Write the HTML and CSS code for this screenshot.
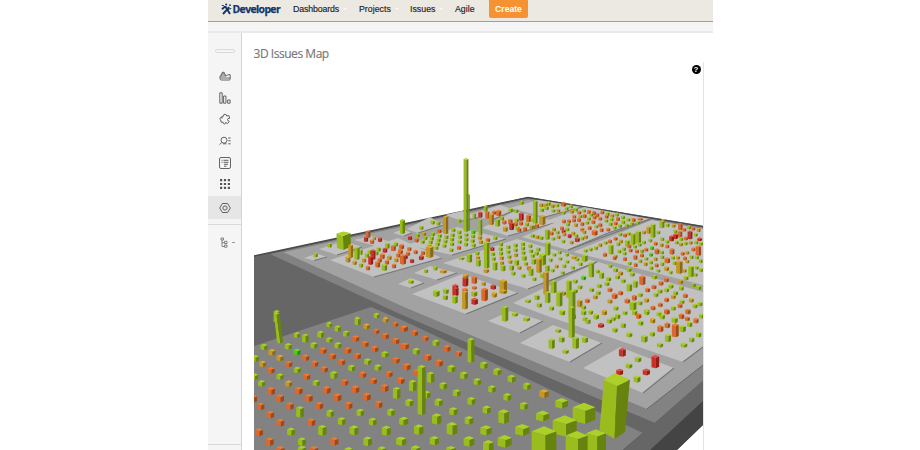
FILE: index.html
```html
<!DOCTYPE html>
<html lang="en">
<head>
<meta charset="utf-8">
<title>3D Issues Map</title>
<link rel="stylesheet" href="styles.css">
</head>
<body>
<div class="app">
  <header class="topbar">
    <div class="logo">
      <svg width="11" height="12" viewBox="0 0 11 12" fill="none" stroke="#12366d"><path stroke-width="1.9" d="M4.2 3.2L9 11M8.2 4.2L2 11M1 6.2L4.2 3.4"/><path stroke-width="1.1" d="M6.2 6.5L10.3 5.5M.8 2.5h2"/><circle cx="5.2" cy="1.6" r="1" fill="#12366d" stroke="none"/><circle cx="9" cy="2.2" r=".9" fill="#12366d" stroke="none"/></svg>
      <span class="brand">Developer</span>
    </div>
    <nav class="nav">
      <a class="item dash">Dashboards<i class="caret"></i></a>
      <a class="item proj">Projects<i class="caret"></i></a>
      <a class="item issues">Issues<i class="caret"></i></a>
      <a class="item agile">Agile</a>
      <a class="create">Create</a>
    </nav>
  </header>
  <div class="strip"></div>
  <div class="body">
    <aside class="sidebar">
      <div class="handle"></div>
      <div class="icons">
        <div class="icon"><svg viewBox="0 0 12 12"><path d="M1 6h6.5l1-1.2H11.2V9q0 1-1 1H2.4Q1 10 1 8.600zM2.200 6V4h4v2M3.200 4V2.300h2V4M1.200 8H11"/></svg></div>
        <div class="icon"><svg viewBox="0 0 12 12"><path d="M.8.8h2.400v10.400H.8zM4.600 4h2.300v7.200H4.600zM8.600 8h2.500v3.200H8.600z"/></svg></div>
        <div class="icon"><svg viewBox="0 0 12 12"><path d="M4.500 3.200Q4.300 1 6 1.200T7.600 3l2.400-.4.6 2.800Q8.500 5.200 8.500 6.600t1.800 1.800L8.500 10.600l-1.900-1.200Q6.500 11.300 5.200 11T4.100 9.200L2 9.100 1.800 7Q.4 6.600 1 5.100t2.200.1L2.900 3.300z"/></svg></div>
        <div class="icon"><svg viewBox="0 0 12 12"><circle cx="5" cy="5.200" r="3"/><path d="M2.800 7.400L.6 9.600M9.200 3h2.500M9.200 5.800h2.500M9.200 8.800h2.500M4 8.800h3.500"/></svg></div>
        <div class="icon"><svg viewBox="0 0 12 12"><rect x=".5" y=".5" width="11" height="11" rx="1.500"/><path d="M2.500 3.300h1M4.500 3.300h5M2.500 5.300h1M4.500 5.300h5M5 7.300h4M5 9.200h2.500"/></svg></div>
        <div class="icon"><svg viewBox="0 0 12 12"><path class="dots" d="M1 2.200h10M1 6h10M1 9.800h10"/></svg></div>
        <div class="icon active"><svg viewBox="0 0 12 12"><path d="M3.400 1.500h5.200L11.300 6 8.600 10.500H3.400L.7 6z"/><circle cx="6" cy="6" r="2.100"/></svg></div>
      </div>
      <div class="tree">
        <svg width="9" height="11" viewBox="0 0 9 11"><path d="M1 1h2.500v2H1zM2 3v6.500h2M2 5.700h2M4.500 4.300H7v2.200H4.500zM4.500 8H7v2.200H4.500z"/></svg><i class="tick"></i>
      </div>
      <div class="foot"></div>
    </aside>
    <main class="main">
      <h1>3D Issues Map</h1>
      <div class="stage">
        <svg id="map" width="449" height="388" viewBox="254 62 449 388"></svg>
        <div class="help">?</div>
      </div>
    </main>
  </div>
</div>
<script src="map.js"></script>
</body>
</html>
```
FILE: styles.css
```css
* { box-sizing: border-box; }
body { margin: 0; background: #fff; font-family: "Liberation Sans", Arial, sans-serif; overflow: hidden; }
.app { width: 505px; height: 450px; margin-left: 207.5px; display: flex; flex-direction: column; overflow: hidden; }
.topbar { height: 22px; flex: none; background: #ece9e2; border-bottom: 1px solid #b99877; display: flex; align-items: flex-start; }
.logo { display: flex; align-items: center; width: 85.5px; padding-left: 13px; height: 18px; }
.brand { font: bold 10.4px "Open Sans", sans-serif; color: #12366d; letter-spacing: -.6px; margin-left: 1px; -webkit-text-stroke: .25px #12366d; }
.nav { display: flex; height: 18px; font-size: 8.8px; color: #222; -webkit-text-stroke: .15px #222; }
.item { display: flex; align-items: center; height: 18px; flex: none; }
.dash { width: 66px; letter-spacing: -.13px; }
.proj { width: 51px; }
.issues { width: 45px; }
.agile { width: 34px; }
.caret { border: 2.5px solid transparent; border-top-color: #fbfaf8; border-bottom: 0; margin-left: 4px; }
.create { width: 39px; height: 18px; line-height: 18px; text-align: center; background: #f79232; color: #fff; font-weight: bold; font-size: 8.6px; border-radius: 0 0 2px 2px; -webkit-text-stroke: 0; }
.strip { height: 11px; flex: none; background: #f5f5f5; border-bottom: 2px solid #e9e9e9; }
.body { flex: 1; display: flex; min-height: 0; }
.sidebar { width: 34.5px; flex: none; background: #f5f5f5; border-right: 1px solid #d4d4d4; display: flex; flex-direction: column; }
.handle { width: 20px; height: 4px; border: 1px solid #d9d9d9; border-radius: 2px; margin: 16px 0 0 7px; flex: none; }
.icons { margin-top: 12px; padding-bottom: 5px; border-bottom: 1px solid #d9d9d9; }
.icon { height: 21.7px; display: flex; align-items: center; justify-content: center; padding-left: 1px; }
.icon svg { width: 12px; height: 12px; }
.icon.active { height: 23px; background: #e6e6e6; margin-top: 1px; }
.sidebar svg { fill: none; stroke: #555; stroke-width: .9; }
.sidebar .dots { stroke-width: 2.2; stroke-dasharray: 2.2 1.7; }
.tree { display: flex; align-items: center; height: 34px; padding-left: 12px; }
.tree svg { stroke: #777; }
.tick { width: 3px; height: 1px; background: #999; margin-left: 3px; }
.foot { margin-top: auto; height: 6px; border-top: 1px solid #d9d9d9; }
.main { flex: 1; padding: 13px 0 0 11.5px; min-width: 0; }
h1 { margin: 0; height: 16px; font: 12px/16px "Open Sans", sans-serif; color: #777; letter-spacing: -.46px; -webkit-text-stroke: .15px #777; }
.stage { width: 450px; height: 388px; border-right: 1px solid #e4e4e4; position: relative; }
#map { display: block; }
.help { position: absolute; right: 2px; top: 3px; width: 9px; height: 9px; border-radius: 50%; background: #000; color: #fff; font: bold 8px/9px "Liberation Sans", sans-serif; text-align: center; }
```
FILE: map.js
```js
const map = document.getElementById('map');
const out = [];
const poly = (points, fill, extra = '') => out.push(`<polygon points="${points}" fill="${fill}" ${extra}/>`);

// Base terraces, from the lowest level up.
poly('254,256 528,197 703,226 703,425 677,450 254,450', '#666');
poly('703,401 650,450 677,450 703,425', '#444');
poly('270,254 528,198 703,227 703,381 655,423 400,314', '#828282');
poly('283,252 528,199 703,228 703,365 647,409 404,307', '#a2a2a2');
out.push('<path d="M655 423L703 381M647 409L703 365" stroke="#666" fill="none"/>');
out.push('<path d="M254 256L528 197.5L703 226.5" stroke="#4b4b4b" stroke-width="1.6" fill="none"/>');
out.push('<path d="M284 251.7L528 199.3L703 228.4" stroke="#858585" fill="none"/>');
poly('254,346 371,307 404,321 643,433 623,450 254,450', '#828282');
out.push('<path d="M643 433L623 450" stroke="#606060" fill="none"/>');

// Project plates: left, bottom, right and top corners.
const plates = [
  [304,258,314,260.5,327,257,317,253.5], [319,249,337,255,362,247,344,241],
  [354,240,379,247,391,242,371,236], [393,233,404,236,412,233,403,229],
  [330,260,374,277,442,258,398,238], [407,229,418,233,444,225,430,217],
  [407,245,452,255,506,239,457,227], [445,215,462,221,481,217,462,211],
  [468,215,492,220,515,210,500,205], [482,228,508,236,558,222,515,211],
  [510,208,545,217,582,207,538,200], [522,237,568,250,608,233,556,222],
  [546,221,608,233,650,219,584,207], [443,263,528,289,597,262,517,239],
  [414,273,437,280,457,273,430,266], [398,284,411,288,424,283,411,278],
  [412,294,466,314,518,293,462,274], [488,321,520,333,543,321,510,311],
  [520,343,570,362,602,343,553,325], [583,368,643,393,674,368,620,347]
];
for (const p of plates) {
  out.push(`<path d="M${p[0]} ${p[1]}L${p[2]} ${p[3]}L${p[4]} ${p[5]}L${p[6]} ${p[7]}Z" fill="#c1c1c1"/>`);
  out.push(`<path d="M${p[2]} ${p[3]}L${p[4]} ${p[5]}" stroke="#777" stroke-width="1.2"/>`);
}
poly('573,252 652,220 703,229 703,285', '#c1c1c1');
poly('513,303 598,262 703,292 703,347 683,362 550,317', '#c1c1c1');
out.push('<path d="M568 250L650 219.5M683 362L703 347M550 281L597 262" stroke="#777" stroke-width="1.3"/>');

const shades = {
  g: ['#abd128', '#9abc1c', '#66840d'], o: ['#ed7b32', '#dc692b', '#9d481b'],
  y: ['#dcab31', '#c39826', '#8e6914'], r: ['#e24b35', '#cb3028', '#911d18'],
  b: ['#65e51b', '#4fcb13', '#32880b']
};
// Each group: origin, default width, default height, then "kind:x,y[,w,h]" at three units per pixel.
const groups = [
[254,190,10,13, `g:68,379,16,36 g:227,166 g:185,195 y:290,183,12,40 g:309,190,13,38 y:282,208,12,18 y:302,218 g:321,226 o:342,234 r:336,148,10,14 o:342,133,12,22 y:361,145,8,10 r:378,149 o:354,155 g:320,186,9,16 g:339,196 g:347,186 y:330,211 r:357,194,12,30 r:350,211,12,26 g:374,178 g:367,189 r:393,181,11,14 g:400,167,11,18 o:418,174,12,18 g:426,163 o:443,170 o:439,183 o:385,199,12,16 o:377,211 o:371,223,12,18 y:406,203,11,14 o:399,217 y:427,210 g:391,232,14,20 o:420,228 o:433,196 g:445,110,12,42 g:368,377,14,12 g:310,387 y:395,387`],
[400,150,10,12, `g:8,229,12,42 g:98,217 g:64,233 g:115,220 g:178,212 y:137,225,13,54 g:205,188,6,110 g:198,135,12,220 o:118,243 g:160,240 g:178,247 r:30,264 g:53,256 o:50,271 y:72,252 g:76,264 g:68,275 g:98,253 g:95,265 g:92,276 g:88,288 g:119,257 g:116,270 g:113,282 g:109,293 g:139,261,10,13 g:136,274 g:133,287 g:158,255 g:156,268 g:156,282 g:154,300 g:180,260 g:179,275 o:177,293 g:199,254 g:199,268 g:198,283 b:220,246 g:219,259 g:218,272 g:221,286 g:241,232,9,50 y:240,263 y:243,276 o:264,270 g:286,264 g:223,198,8,18 r:241,194,10,17 g:257,177,9,19 o:262,195,10,22 y:274,208,13,34 o:282,188 o:296,189,13,18 g:332,180 g:349,183 g:365,158 g:293,218,12,23 o:313,217 y:316,237,12,16 g:306,205 o:331,215,11,16 r:335,229,12,22 g:350,211 r:364,200,12,24 o:347,223 g:353,235 o:358,240 o:363,220 o:386,205,12,22 g:381,223 o:375,237 y:395,231 g:406,186,11,70 y:427,210,16,30 o:411,227 g:398,210 g:426,180 g:440,174 y:424,165 y:437,166 g:446,161 o:5,290,12,14 o:2,306 o:9,328,16,30 o:28,297 o:24,311 r:17,321 r:36,333 o:47,306 r:64,323,12,14 o:69,309 y:89,305,20,36 g:78,363 g:106,355 y:130,364,18,11 g:33,395,14,12 g:260,315,14,80 g:185,325,14,10 g:208,324,14,27 g:232,310 y:234,324 g:235,338,12,22 y:259,362,14,13 r:277,297 g:279,312 g:281,326 g:285,348,12,26 g:303,283 g:302,297 g:303,310 y:305,324 y:306,339 g:309,354,12,19 g:325,291 g:325,305 g:328,320 y:331,335 g:335,353,12,17 g:340,370 g:347,286 g:347,300 y:348,315 g:350,337,12,18 y:358,353 g:370,377 g:369,282 g:369,295 g:370,308 g:373,324,12,16 g:378,341 o:387,355 g:393,366,12,24 g:403,387 g:391,288 g:393,303 g:398,317 g:401,334,12,18 y:417,346,14,44 g:427,376,12,15 g:415,298 g:410,310 g:428,328,18,35 g:443,296,14,40 y:438,399,14,70 g:442,355,11,20 g:398,257 y:412,261 g:424,264 g:400,230 g:442,253,12,32 y:197,389,14,34 r:196,395,14,28 o:223,390,14,22 o:223,413,12,10 y:251,401 r:280,411,14,15 y:310,409,22,44 r:166,420,15,34 g:109,429,16,18 g:137,422,14,13 g:137,442 y:195,438,14,20 o:254,431,16,34 g:222,431,14,16 y:283,436 g:411,440`],
[550,190,9,11, `o:41,43,14,13 g:22,46 y:8,48 g:50,55 g:63,49 g:78,59 y:25,62 g:10,62 g:41,68 y:66,65 o:88,68 g:102,62 o:117,66 o:132,69 g:124,74 o:142,75 o:157,67 g:173,72 y:187,77 o:170,80 g:201,74 o:151,86 g:185,88 o:204,87 g:219,82 g:235,89 o:251,90 g:220,96 o:197,100 g:182,102 g:169,92 o:151,105 o:134,82 g:117,86 o:104,78 g:91,79 o:73,80 o:57,94 o:72,91 o:87,90 o:97,102 g:112,98 o:130,96 g:139,109 o:155,120 o:175,119 g:194,113 g:210,108 g:230,106 g:246,101 o:271,87,13,8 g:264,98 o:42,94 g:54,103 y:78,105 o:119,114 o:97,119 y:70,130 o:134,128,15,17 y:103,126 g:52,118 o:36,115 r:41,124 y:12,118 g:23,127 o:5,130 y:26,141 r:59,138 y:43,133 g:79,137 g:97,145 r:82,149,12,14 y:65,157 g:40,154 g:10,146 y:108,141
g:211,133 o:225,136 g:236,131 o:197,146 o:180,154 g:167,158 y:151,165 g:138,174 g:107,182 g:122,178 g:183,178,12,30 g:205,162 y:213,154 g:232,160,11,20 g:249,147,12,35 g:265,141,14,38 y:282,127 y:296,120,11,22 g:309,122,12,42 g:325,127 g:336,103,12,22 y:340,93 g:353,105 y:371,107 o:391,110,11,20 o:403,119 g:417,112 o:430,116 y:446,120 g:376,124 r:365,145,12,17 o:390,132,11,20 r:377,139,12,16 g:394,147 r:420,135,12,25 o:408,145 g:437,134 r:449,148,12,10 y:393,163 g:407,160 y:422,158 g:439,157 g:453,161 g:380,157 g:352,155 o:352,169 o:366,184,12,18 g:337,147 y:335,165 o:321,184,12,17 b:306,174 b:303,194 o:317,161 g:301,151 g:282,157 g:269,164 g:255,170 o:238,169 g:222,177 g:208,184 g:197,199 o:225,207 o:165,194,10,12 o:194,204 g:224,190 o:242,181 o:261,184 g:276,183 o:256,202,10,14 g:239,220 o:289,179 o:276,196 g:289,206 g:271,213 o:257,225 y:287,222 g:303,217 y:317,207 g:336,187 g:337,201 o:352,211,14,17 g:337,222 o:320,226 g:304,234 g:325,242 y:350,236,12,14 y:388,231,17,40 g:369,203 y:384,203 y:412,188 o:398,191 o:445,182,14,30 o:430,178 g:425,201 g:441,202 y:412,214 o:405,205 g:374,219 g:423,244,14,34 g:440,233 y:404,242 g:437,254 g:453,240 g:452,213 g:362,247
g:29,187 g:51,194 y:73,202,15,11 g:104,204,16,22 g:13,194 g:31,206 g:52,215 g:82,208 g:2,210 y:20,229 g:43,228 g:69,233 g:8,241 g:92,222 g:124,239,14,45 g:38,248 g:155,256,12,20 g:143,244 g:181,228`],
[550,190,12,13, `g:197,240 y:212,250 g:237,239 g:247,253 o:277,271,16,28 g:314,261 o:349,270 o:333,280 g:363,289 y:392,275 g:408,264 g:394,295 g:430,285 g:446,293 g:176,267 g:203,261 g:220,272 g:238,292,14,24 g:256,282,12,22 o:180,299 g:171,281 g:148,287 g:125,299 o:194,318,15,17 o:212,309 g:145,308 y:180,334 o:232,333,14,14 o:253,323,12,16 g:271,314 o:293,300 o:312,291 g:249,347,18,28 g:270,339 y:290,331 o:331,344 g:318,314 g:330,304 g:350,300 o:350,329 y:370,320 g:377,309 o:406,317 y:424,331 g:396,335 o:390,347 g:370,355 o:352,366 o:309,354 g:327,372 g:291,368 o:266,379 y:163,368 o:112,332 g:198,355 g:225,368 g:190,386 g:138,381 g:105,387 g:122,367 y:136,321 y:89,340,14,22 g:101,352 b:101,263 g:76,274 g:90,291 g:11,290,15,38 g:28,326,16,46 g:57,297,13,54 g:66,345,18,90 y:41,310 g:37,367,14,14 g:5,355 g:76,303 g:435,348 g:413,364 g:450,342 g:393,377 o:412,386`],
[550,310,13,15, `g:37,8 g:101,8 y:163,7 g:70,20 g:139,20 g:203,19 o:266,18 g:114,34 g:178,33 r:153,46,16,14 g:195,60 g:220,46 g:238,74,15,15 g:254,8 g:290,5 y:308,32 g:272,39 g:307,72 g:283,86,17,22 g:330,105,16,14 o:331,56,16,20 o:352,46,14,16 g:374,30,16,17 o:376,61,18,40 g:398,56,17,20 g:419,43 g:354,84,16,24 g:402,105,17,14 g:425,89 g:446,74 o:438,32 o:395,19 o:350,5 o:414,5 g:337,20 g:455,18 g:65,36,16,94 g:25,62,15,12 g:5,101,16,30 g:35,88,15,18 g:77,98,17,36 g:105,89,16,18 g:47,124,16,14 r:217,127,18,25 r:316,155,23,40 g:264,148,17,17 g:237,167,17,16 r:209,186,18,18 r:289,186,19,19 g:261,207,18,20 g:35,280,38,32 g:102,310,68,64 g:44,348,72,64 g:80,399,66,72 g:138,395,60,74`],
[400,290,13,15, `g:109,10,16,20 g:138,4 g:136,22 g:165,28,14,24 r:167,5,14,26 y:195,30,15,55 o:195,2 y:224,11 r:224,34,17,20 o:254,14,16,38 y:283,14 y:310,5,20,12 g:315,71,17,46 g:345,73,16,12 g:380,87,18,13 g:384,33,15,12 g:411,22 g:418,45 g:443,22,14,34 o:14,116 o:44,129 o:76,145,16,15 g:108,159 o:141,175 o:176,191,17,17 g:213,181,18,73 o:16,168 g:49,184 o:83,202 o:117,219 g:154,236 g:192,256 g:252,226 g:292,245 g:335,266 g:381,289 y:432,311,28,27 g:232,275 g:276,297 g:322,321 g:372,348 g:428,378,40,33 o:20,230 g:92,262,20,32 g:130,287 g:170,309 g:214,333 g:260,359 g:311,380,32,44 g:367,420,43,36 o:2,272 g:38,287,20,33 o:52,248 g:80,314 g:65,300,24,150 g:28,338 g:116,337 g:160,364 g:207,391 g:258,421,34,31 g:314,454,42,38 g:12,393 g:110,387,28,34 g:56,419,28,32 g:156,416,32,40 g:103,452 g:207,454,32,32 g:265,468,32,36 g:5,454 g:47,480 g:153,482 g:432,453,74,88`],
[254,310,19,18, `g:129,75,16,16 g:154,85,17,26 g:200,73,18,20 g:226,44,15,15 g:251,56,17,18 g:311,34,16,22 y:338,49,17,16 g:368,17,15,15 y:395,30,16,15 o:424,43,15,14 o:366,64,17,15 g:277,71,17,17 g:226,90,17,15 g:252,106 g:180,106 o:207,122 g:103,109 b:129,126 y:54,127 g:30,111 g:4,145 y:26,162 y:78,144 o:155,143 o:104,162 o:182,161 o:235,139 o:281,121 o:305,86 o:333,102 o:394,78 o:425,93 o:310,138 o:263,156 o:362,117 g:393,133 g:341,155 g:372,173 o:426,151 g:293,174 o:211,178 g:130,180 o:158,200 g:78,200 o:51,181 g:2,200 g:23,220 y:104,221 g:187,219 g:240,195,20,22 o:272,217 o:326,194 o:358,213 o:405,192 o:440,212 o:392,234 o:304,238 o:338,260 o:374,283 g:428,249,20,34 o:218,240 o:250,262 o:284,286 o:134,242 o:164,264 o:196,287 o:51,243 o:78,265 o:108,288 o:20,289 o:49,314 g:138,306,23,34 g:229,310 g:319,308 g:411,307 g:263,334 g:356,335 o:172,337 o:79,338 g:205,361,25,32 g:300,361,27,30 g:397,362,27,30 g:111,365 o:15,367 o:47,395 g:144,395 o:241,394 g:341,394,26,29 g:438,393 o:79,421 o:180,421 g:144,420 g:284,424 g:384,422 g:447,334 o:-3,266 o:449,56 o:449,108`]
];
const blocks = [];
for (const [ox, oy, dw, dh, list] of groups) {
  for (const entry of list.split(/\s+/)) {
    const [kind, values] = entry.split(':');
    let [x, y, w = dw, h = dh] = values.split(',').map(Number);
    // Blocks on the near floor grow towards the viewer.
    if (ox === 400 && oy === 290 && w === 13 && y > 100) { w = 17 + (y - 110) / 32; h = w; }
    if (ox === 254 && oy === 310 && y > 230 && w === 19) { w = 21 + (y - 230) / 50; h = w + 1; }
    if (w < 22) { w += 2.5; h += 2; }
    blocks.push([kind, ox + x / 3, oy + y / 3, w / 3, h / 3]);
  }
}
blocks.push(['tower', 614, 406, 30, 68], ['cube', 343, 241, 15, 18], ['pillar', 278, 328, 9, 31]);
const solids = {
  tower: [['604,380 617,386 614.5,439 599.5,430'], ['617,386 630,379.5 625,432 614.5,439'], ['604,380 614.5,373 630,379.5 617,386']],
  cube: [['336.5,233.500 343,236 343.5,250 337,248'], ['343,236 350.500,233 351,246.500 343.500,250'], ['336.500,233.500 343.500,231.500 350.500,233 343,236']],
  pillar: [['274,313.500 276.500,314.500 280.500,344 277,342.500'], ['276.500,314.500 279.500,313.500 283,342 280.500,344'], ['274,313.500 276.500,312 279.500,313.500 276.500,314.500']]
};
blocks.sort((a, b) => (a[2] + a[4] / 2) - (b[2] + b[4] / 2));
for (const [kind, cx, cy, w, h] of blocks) {
  if (solids[kind]) {
    const [front, side, top] = solids[kind];
    poly(front[0], '#9abc1c');
    poly(side[0], '#67830d');
    poly(top[0], '#abd128');
    continue;
  }
  const [top, front, side] = shades[kind];
  const x = cx - w / 2, y = cy - h / 2, r = x + w, b = y + h;
  const m = x + w * .56, d = Math.min(w * .2, h * .24);
  poly([x, y + d, m, y + d * 1.8, m, b, x, b - d * .7].join(' '), front);
  poly([m, y + d * 1.8, r, y + d, r, b - d, m, b].join(' '), side);
  poly([x, y + d, x + w * .5, y, r, y + d, m, y + d * 1.8].join(' '), top);
}
map.innerHTML = out.join('');
```
